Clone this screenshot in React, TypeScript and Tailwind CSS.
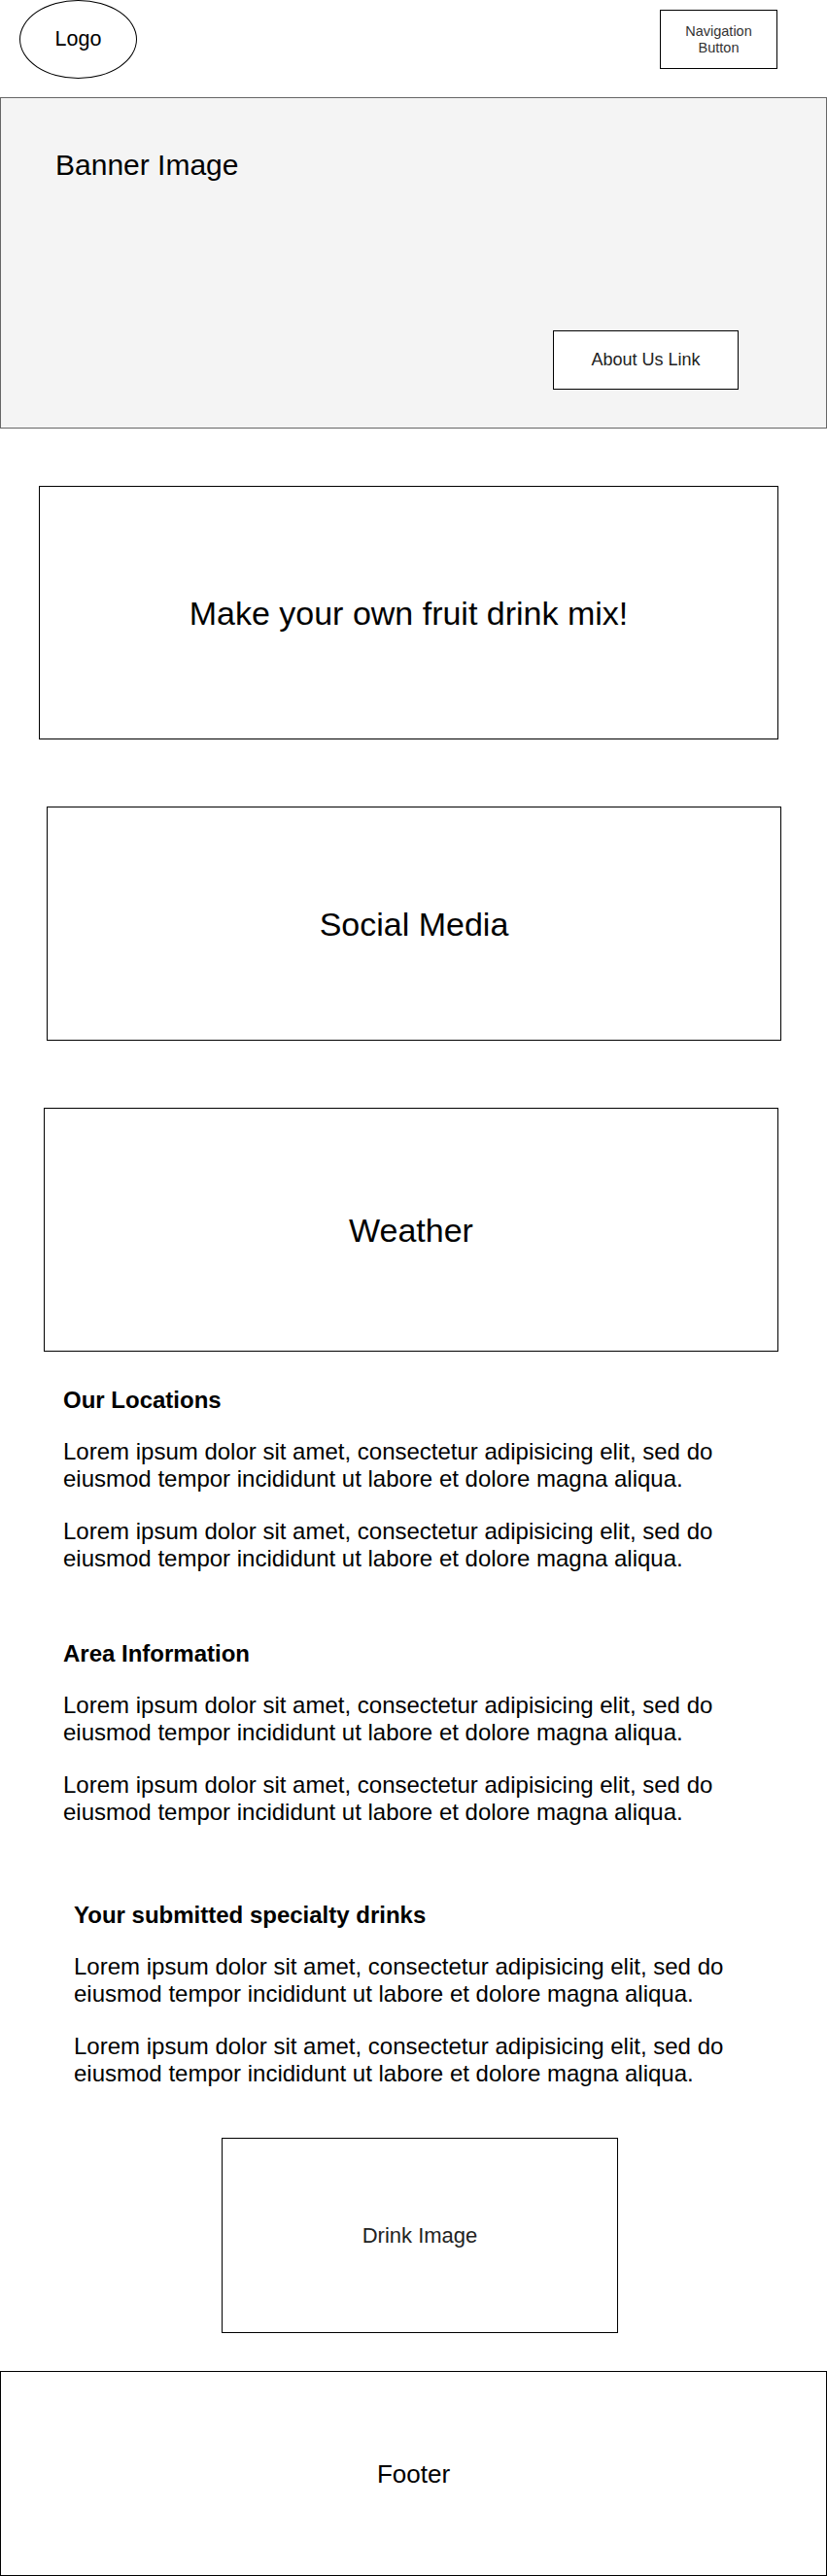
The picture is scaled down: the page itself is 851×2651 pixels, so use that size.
import React from "react";

const lorem =
  "Lorem ipsum dolor sit amet, consectetur adipisicing elit, sed do eiusmod tempor incididunt ut labore et dolore magna aliqua.";

function TextSection({
  title,
  className,
}: {
  title: string;
  className: string;
}) {
  return (
    <section className={className}>
      <h2 className="text-[24px] leading-[28px] font-bold text-black">{title}</h2>
      <p className="mt-[25px] w-[700px] text-[24px] leading-[28px] text-black">{lorem}</p>
      <p className="mt-[26px] w-[700px] text-[24px] leading-[28px] text-black">{lorem}</p>
    </section>
  );
}

export default function App() {
  return (
    <div
      className="w-[851px] bg-white text-black"
      style={{ fontFamily: '"Liberation Sans", Arial, Helvetica, sans-serif' }}
    >
      {/* Header */}
      <header className="flex h-[100px] items-start justify-between">
        <div className="ml-[20px] flex h-[81px] w-[121px] items-center justify-center rounded-[50%] border border-black">
          <span className="text-[21.5px] leading-none">Logo</span>
        </div>
        <button className="mr-[51px] mt-[10px] flex h-[61px] w-[121px] flex-col items-center justify-center border border-black bg-white text-[14.5px] leading-[17px] text-[#333]">
          <span>Navigation</span>
          <span>Button</span>
        </button>
      </header>

      {/* Banner */}
      <section className="flex h-[341px] flex-col border border-[#666] bg-[#f4f4f4]">
        <h1 className="ml-[56px] mt-[51px] text-[30px] leading-[36px]">Banner Image</h1>
        <a className="mb-[39px] mr-[90px] mt-auto flex h-[61px] w-[191px] items-center justify-center self-end border border-black bg-white text-[18px] text-[#222]">
          About Us Link
        </a>
      </section>

      {/* Make your own */}
      <div className="ml-[40px] mt-[59px] flex h-[261px] w-[761px] items-center justify-center border border-black">
        <span className="text-[34px] leading-none">Make your own fruit drink mix!</span>
      </div>

      {/* Social media */}
      <div className="ml-[48px] mt-[69px] flex h-[241px] w-[756px] items-center justify-center border border-black">
        <span className="text-[34px] leading-none">Social Media</span>
      </div>

      {/* Weather */}
      <div className="ml-[45px] mt-[69px] flex h-[251px] w-[756px] items-center justify-center border border-black">
        <span className="text-[34px] leading-none">Weather</span>
      </div>

      <TextSection title="Our Locations" className="ml-[65px] mt-[36px]" />
      <TextSection title="Area Information" className="ml-[65px] mt-[70px]" />
      <TextSection title="Your submitted specialty drinks" className="ml-[76px] mt-[78px]" />

      {/* Drink image */}
      <div className="ml-[228px] mt-[52px] flex h-[201px] w-[408px] items-center justify-center border border-black">
        <span className="text-[22px] leading-none text-[#222]">Drink Image</span>
      </div>

      {/* Footer */}
      <footer className="mt-[39px] flex h-[211px] w-[851px] items-center justify-center border border-black">
        <span className="text-[26px] leading-none">Footer</span>
      </footer>
    </div>
  );
}
